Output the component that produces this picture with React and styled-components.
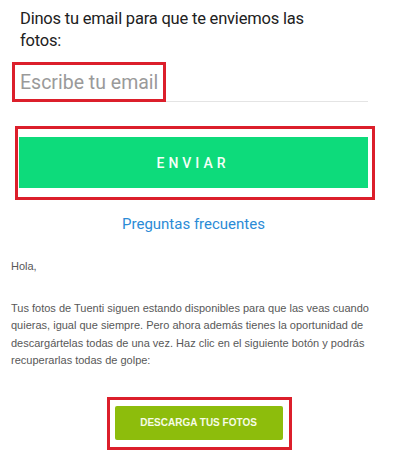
import React from "react";
import styled, { createGlobalStyle } from "styled-components";

const Global = createGlobalStyle`
  body {
    margin: 0;
    background: #fff;
  }
`;

const Page = styled.div`
  width: 400px;
  height: 472px;
  overflow: hidden;
`;

const Form = styled.div`
  font-family: Roboto, "Noto Sans", sans-serif;
  padding: 8px 32px 0 20px;
`;

const Title = styled.h1`
  margin: 0;
  max-width: 310px;
  font-size: 16.5px;
  font-weight: 400;
  letter-spacing: -0.2px;
  line-height: 22px;
  color: #212121;
`;

const Field = styled.div`
  margin-top: 10px;
  border-bottom: 1px solid #e4e4e4;
  display: flex;
`;

const Mark = styled.div`
  border: 3px solid #dc1f2b;
  box-sizing: border-box;
`;

const EmailMark = styled(Mark)`
  margin: 0 0 -1px -8px;
  height: 40px;
  padding: 0 5px 0 5px;
  display: flex;
  align-items: center;
`;

const Placeholder = styled.span`
  font-size: 19.5px;
  color: #9a9a9a;
`;

const SendMark = styled(Mark)`
  margin: 24px -7px 0 -5px;
  padding: 8px 4px 9px 1px;
`;

const SendButton = styled.button`
  display: block;
  width: 100%;
  height: 51px;
  border: 0;
  background: #0ddb7b;
  color: #f4fff8;
  font-family: Roboto, sans-serif;
  font-size: 14px;
  font-weight: 500;
  letter-spacing: 4px;
  padding-left: 5px;
`;

const Faq = styled.a`
  display: block;
  text-align: center;
  margin: 15px 0 0 -1px;
  font-size: 15px;
  color: #2b8bd6;
  text-decoration: none;
`;

const Mail = styled.div`
  font-family: "Liberation Sans", Arial, sans-serif;
  font-size: 11px;
  color: #585858;
  padding: 0 20px 0 11px;
  margin-top: 25px;
`;

const Para = styled.p`
  margin: 0 0 ${(p) => p.gap}px;
  line-height: 17.5px;
`;

const Center = styled.div`
  display: flex;
  justify-content: center;
  margin-top: 27px;
  padding-right: 2px;
`;

const DownloadMark = styled(Mark)`
  padding: 6px 6px 7px 5px;
`;

const DownloadButton = styled.button`
  width: 168px;
  height: 34px;
  border: 0;
  border-radius: 2px;
  background: #8dbd0c;
  color: #f6fbe6;
  font-family: "Liberation Sans", Arial, sans-serif;
  font-size: 10px;
  font-weight: 700;
`;

export default function App() {
  return (
    <Page>
      <Global />
      <Form>
        <Title>Dinos tu email para que te enviemos las fotos:</Title>
        <Field>
          <EmailMark>
            <Placeholder>Escribe tu email</Placeholder>
          </EmailMark>
        </Field>
        <SendMark>
          <SendButton>ENVIAR</SendButton>
        </SendMark>
        <Faq href="#">Preguntas frecuentes</Faq>
      </Form>
      <Mail>
        <Para gap={24}>Hola,</Para>
        <Para gap={0}>
          Tus fotos de Tuenti siguen estando disponibles para que las veas cuando quieras, igual que
          siempre. Pero ahora además tienes la oportunidad de descargártelas todas de una vez. Haz
          clic en el siguiente botón y podrás recuperarlas todas de golpe:
        </Para>
      </Mail>
      <Center>
        <DownloadMark>
          <DownloadButton>DESCARGA TUS FOTOS</DownloadButton>
        </DownloadMark>
      </Center>
    </Page>
  );
}
